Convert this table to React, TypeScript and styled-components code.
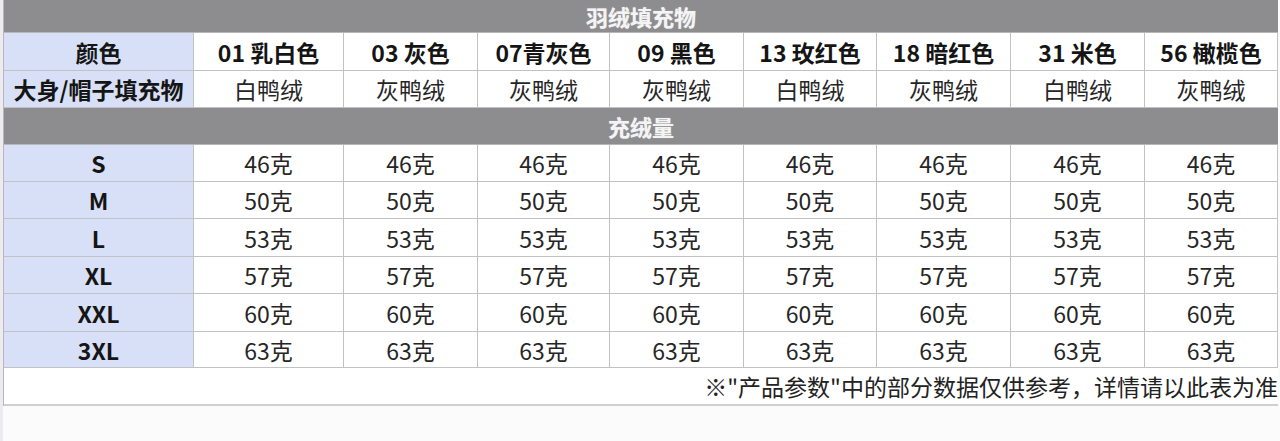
import React from 'react';
import styled, { createGlobalStyle } from 'styled-components';

const GlobalStyle = createGlobalStyle`
  html, body {
    margin: 0;
    padding: 0;
    background: #fbfbfc;
    font-family: "Noto Sans CJK SC", "Noto Sans", sans-serif;
  }
`;

const Page = styled.div`
  width: 1280px;
  height: 441px;
  padding-left: 3px;
  box-sizing: border-box;
  background: linear-gradient(to right, #ececf0 0, #ececf0 3px, #fbfbfc 3px);
`;

const Table = styled.div`
  display: grid;
  width: 1274px;
  grid-template-columns: 190px 150px 134px 132px 134px 133px 134px 134px 133px;
  grid-template-rows: 33px 38px 37px 37px 37px 37px 38px 37px 38px 36px 38px;
  border-left: 1px solid #b8b8bc;
  box-sizing: border-box;
`;

const SectionBar = styled.div`
  grid-column: 1 / -1;
  background: #8d8d8f;
  color: #f4f4f4;
  font-weight: 700;
  font-size: 22px;
  display: flex;
  align-items: center;
  justify-content: center;
  text-shadow: 0 0 1px rgba(255, 255, 255, 0.6);
  border-bottom: 1px solid #b8b8bc;
`;

const Cell = styled.div<{ $side?: boolean; $bold?: boolean }>`
  display: flex;
  align-items: center;
  justify-content: center;
  background: ${(p) => (p.$side ? '#d7e0f6' : '#ffffff')};
  border-right: 1px solid #c2c2c6;
  border-bottom: 1px solid #c2c2c6;
  font-size: ${(p) => (p.$bold ? '23px' : '23px')};
  font-weight: ${(p) => (p.$bold ? 700 : 400)};
  color: ${(p) => (p.$bold ? '#151515' : '#262626')};
  white-space: nowrap;
  overflow: hidden;
`;

const NoteRow = styled.div`
  grid-column: 1 / -1;
  display: flex;
  align-items: center;
  justify-content: flex-end;
  background: #ffffff;
  border-bottom: 2px solid #cfcfd3;
  font-size: 23px;
  color: #222;
  white-space: nowrap;
`;

const colors = ['01 乳白色', '03 灰色', '07青灰色', '09 黑色', '13 玫红色', '18 暗红色', '31 米色', '56 橄榄色'];
const fills = ['白鸭绒', '灰鸭绒', '灰鸭绒', '灰鸭绒', '白鸭绒', '灰鸭绒', '白鸭绒', '灰鸭绒'];
const sizes: [string, number][] = [
  ['S', 46],
  ['M', 50],
  ['L', 53],
  ['XL', 57],
  ['XXL', 60],
  ['3XL', 63],
];

export default function App() {
  return (
    <>
      <GlobalStyle />
      <Page>
        <Table>
          <SectionBar>羽绒填充物</SectionBar>

          <Cell $side $bold>颜色</Cell>
          {colors.map((c) => (
            <Cell key={c} $bold>{c}</Cell>
          ))}

          <Cell $side $bold>大身/帽子填充物</Cell>
          {fills.map((f, i) => (
            <Cell key={i}>{f}</Cell>
          ))}

          <SectionBar>充绒量</SectionBar>

          {sizes.map(([size, grams]) => (
            <React.Fragment key={size}>
              <Cell $side $bold>{size}</Cell>
              {colors.map((c) => (
                <Cell key={c}>{grams}克</Cell>
              ))}
            </React.Fragment>
          ))}

          <NoteRow>※"产品参数"中的部分数据仅供参考，详情请以此表为准</NoteRow>
        </Table>
      </Page>
    </>
  );
}
